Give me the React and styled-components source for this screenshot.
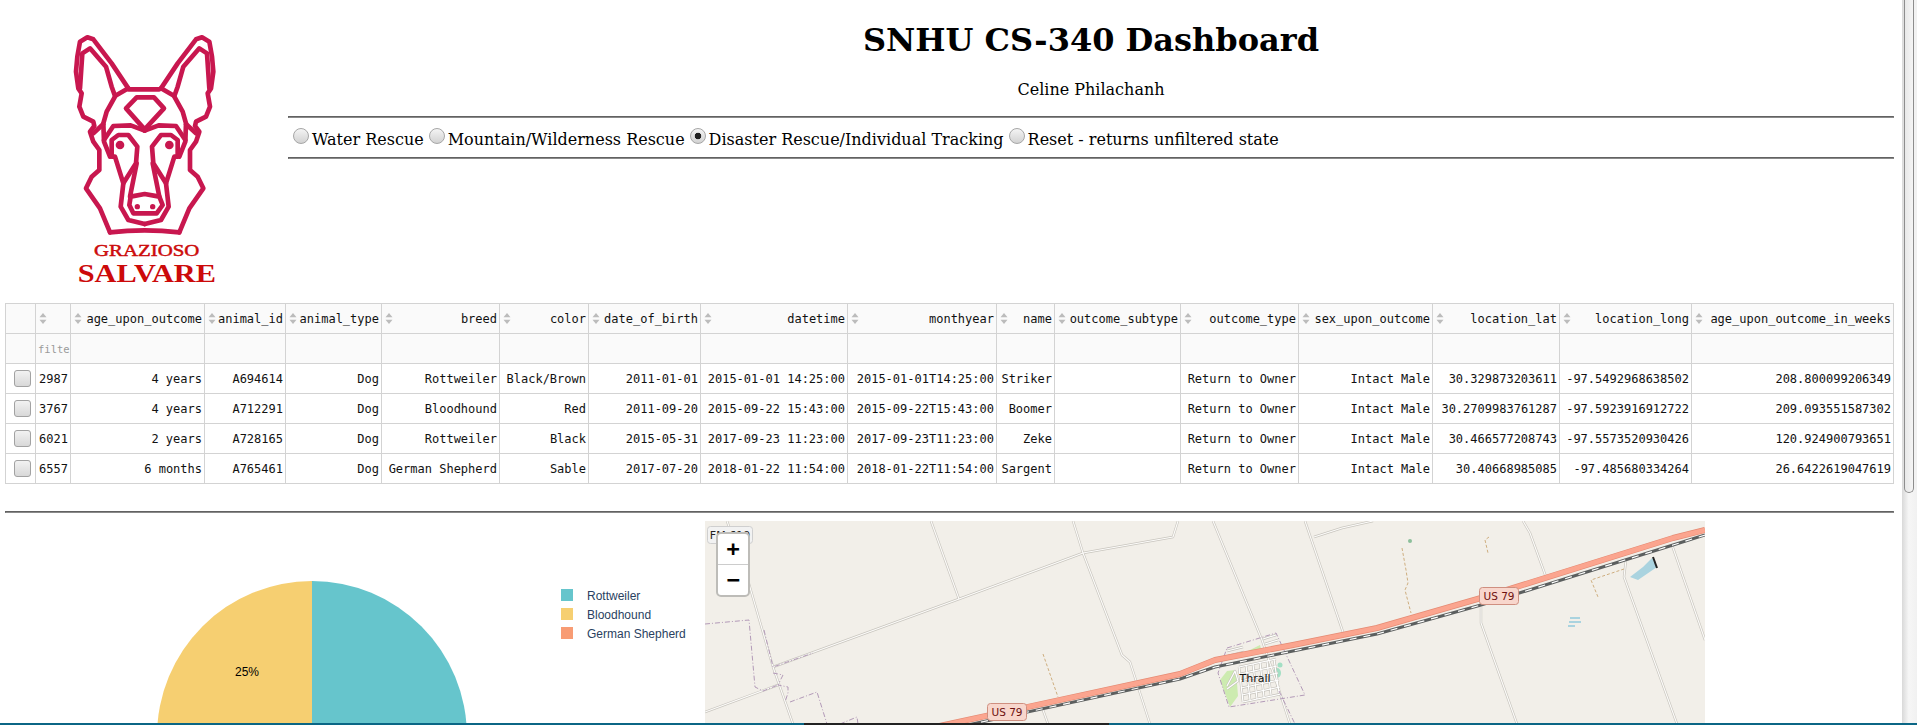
import React from 'react'
import styled, { createGlobalStyle } from 'styled-components'

const columns = [
  { name: '', width: 30 },
  { name: '', width: 35, sort: true },
  { name: 'age_upon_outcome', width: 134, sort: true },
  { name: 'animal_id', width: 81, sort: true },
  { name: 'animal_type', width: 96, sort: true },
  { name: 'breed', width: 118, sort: true },
  { name: 'color', width: 89, sort: true },
  { name: 'date_of_birth', width: 112, sort: true },
  { name: 'datetime', width: 147, sort: true },
  { name: 'monthyear', width: 149, sort: true },
  { name: 'name', width: 58, sort: true },
  { name: 'outcome_subtype', width: 126, sort: true },
  { name: 'outcome_type', width: 118, sort: true },
  { name: 'sex_upon_outcome', width: 134, sort: true },
  { name: 'location_lat', width: 127, sort: true },
  { name: 'location_long', width: 132, sort: true },
  { name: 'age_upon_outcome_in_weeks', width: 202, sort: true },
]

const rows = [
  ['2987', '4 years', 'A694614', 'Dog', 'Rottweiler', 'Black/Brown', '2011-01-01', '2015-01-01 14:25:00', '2015-01-01T14:25:00', 'Striker', '', 'Return to Owner', 'Intact Male', '30.329873203611', '-97.5492968638502', '208.800099206349'],
  ['3767', '4 years', 'A712291', 'Dog', 'Bloodhound', 'Red', '2011-09-20', '2015-09-22 15:43:00', '2015-09-22T15:43:00', 'Boomer', '', 'Return to Owner', 'Intact Male', '30.2709983761287', '-97.5923916912722', '209.093551587302'],
  ['6021', '2 years', 'A728165', 'Dog', 'Rottweiler', 'Black', '2015-05-31', '2017-09-23 11:23:00', '2017-09-23T11:23:00', 'Zeke', '', 'Return to Owner', 'Intact Male', '30.466577208743', '-97.5573520930426', '120.924900793651'],
  ['6557', '6 months', 'A765461', 'Dog', 'German Shepherd', 'Sable', '2017-07-20', '2018-01-22 11:54:00', '2018-01-22T11:54:00', 'Sargent', '', 'Return to Owner', 'Intact Male', '30.40668985085', '-97.485680334264', '26.6422619047619'],
]

const filters = [
  { label: 'Water Rescue' },
  { label: 'Mountain/Wilderness Rescue' },
  { label: 'Disaster Rescue/Individual Tracking', checked: true },
  { label: 'Reset - returns unfiltered state' },
]

const legend = [
  { label: 'Rottweiler', color: '#66c5cc' },
  { label: 'Bloodhound', color: '#f6cf71' },
  { label: 'German Shepherd', color: '#f89c74' },
]

const roads = [
  '22,0 42,56 68,146 88,203',
  '226,0 254,78',
  '68,146 254,78 378,32 468,16 473,0',
  '368,0 378,32 417,134 425,141 445,203',
  '0,191 73,164',
  '338,189 343,203',
  '508,0 557,119 574,169 585,203',
  '600,0 639,114',
  '609,16 637,7 668,0',
  '818,0 825,12 841,56',
  '776,86 776,102 812,203',
  '921,39 919,56 972,203',
  '967,24 1000,119',
]

// thrall street grid, drawn under the highway
const streets = [
  '534,146 571,138',
  '535,153 572,145',
  '535,160 573,152',
  '536,167 574,159',
  '537,174 575,166',
  '538,181 576,173',
  '534,146 538,181',
  '541,144 545,179',
  '548,143 552,178',
  '555,141 559,176',
  '562,140 566,174',
  '569,138 574,172',
  '522,130 538,126',
  '523,135 539,131',
  '558,118 571,114',
  '560,123 573,119',
  '522,165 530,150 533,160 522,168',
]

const boundaries = [
  '0,103 44,99 50,166 58,170 73,164',
  '85,181 112,171 122,203',
  '135,203 152,196 153,203',
  '59,109 68,146 108,132',
  '68,152 78,154 73,164 83,166 83,172 80,181',
  '522,127 571,112 600,174 524,186 513,152 522,127',
  '574,170 590,203',
]

const tracks = [
  '338,133 353,176',
  '697,27 701,49 703,62 700,69 706,92',
  '784,16 780,19 783,32',
  '919,48 886,59 893,76',
]

const highway = '230,206 475,153 510,139 588,124 672,107 776,77 968,17 1000,9'
const railway = '235,210 475,158 510,146 588,130 672,113 776,84 968,24 1000,14'

const shields = [
  { x: 282, y: 182 },
  { x: 774, y: 66 },
]

const GlobalStyle = createGlobalStyle`
  html, body {
    margin: 0;
    height: 100%;
    overflow: hidden;
    background: #fff;
  }
`

const Shell = styled.div`
  display: flex;
  height: 100vh;
`

const Page = styled.div`
  flex: 1;
  min-width: 0;
  overflow-y: auto;
  font-family: 'DejaVu Serif', serif;
  color: #000;
`

const ScrollRail = styled.div`
  flex: none;
  width: 15px;
  box-sizing: border-box;
  padding: 0 3px 0 2px;
  background: linear-gradient(to right, #d9d9d9, #f6f6f6 45%, #f1f1f1);
`

const ScrollThumb = styled.div`
  height: 493px;
  box-sizing: border-box;
  border: 1px solid #8d8d8d;
  border-top: 0;
  border-radius: 0 0 5px 5px;
  background: linear-gradient(to right, #e8e8e8, #f5f5f5);
`

const Content = styled.div`
  padding: 0 8px 45px 5px;
`

const Header = styled.header`
  display: flex;
  height: 303px;
`

const Logo = styled.svg`
  flex: none;
  width: 283px;
  height: 295px;
`

const HeaderMain = styled.div`
  flex: 1;
  min-width: 0;
`

const Title = styled.h1`
  margin: 22px 0 21px;
  font-size: 32px;
  line-height: 37px;
  text-align: center;
`

const Author = styled.p`
  margin: 0 0 17px;
  font-size: 16px;
  line-height: 19px;
  text-align: center;
`

const Rule = styled.hr`
  margin: 0;
  height: 0;
  border: 1px solid;
  border-color: #626262 #808080 #8a8a8a #626262;
`

const Filters = styled.div`
  height: 39px;
  box-sizing: border-box;
  padding: 4px 0 0 5px;
  display: flex;
  align-items: center;
  gap: 5px;
  font-size: 16px;
`

const FilterLabel = styled.label`
  display: flex;
  align-items: center;
  gap: 3px;
`

const Radio = styled.input`
  appearance: none;
  flex: none;
  width: 16px;
  height: 16px;
  margin: -8px 0 0;
  border: 1px solid #a6a6a6;
  border-radius: 50%;
  background: linear-gradient(#f4f4f4, #d2d2d2);

  &:checked {
    background: radial-gradient(circle, #222 0 3px, transparent 3.6px), linear-gradient(#f4f4f4, #d2d2d2);
  }
`

const Table = styled.table`
  table-layout: fixed;
  border-collapse: collapse;
  width: 1888px;
  font-family: 'DejaVu Sans Mono', monospace;
  font-size: 12px;
  color: #111;
`

const HeadCell = styled.th`
  height: 29px;
  padding: 0 2px 0 3px;
  border: 1px solid #d3d3d3;
  background: #fafafa;
  font-weight: 400;
`

const FilterCell = styled(HeadCell)`
  padding: 0 0 0 2px;
`

const HeadInner = styled.div`
  display: flex;
  align-items: center;
  justify-content: space-between;
  white-space: nowrap;
`

const FilterInput = styled.input`
  display: block;
  width: 32px;
  padding: 0;
  border: 0;
  outline: 0;
  background: transparent;
  font-family: 'DejaVu Sans Mono', monospace;
  font-size: 10.5px;

  &::placeholder {
    color: #9a9a9a;
  }
`

const Cell = styled.td`
  height: 29px;
  padding: 0 2px 0 3px;
  border: 1px solid #d3d3d3;
  text-align: right;
  white-space: nowrap;
`

const CheckCell = styled(Cell)`
  padding: 0 0 0 3px;
  text-align: center;
`

const RowCheck = styled.input`
  appearance: none;
  display: block;
  width: 17px;
  height: 17px;
  margin: 0 auto;
  border: 1px solid #a2a2a2;
  border-radius: 3px;
  background: linear-gradient(#f2f2f2, #d8d8d8);
`

const BottomRule = styled(Rule)`
  margin: 27px 0 8px;
`

const Lower = styled.section`
  display: flex;
  align-items: flex-start;
`

const Chart = styled.svg`
  flex: none;
  width: 700px;
  height: 500px;
`

const MapBox = styled.div`
  position: relative;
  flex: none;
  width: 1000px;
  height: 500px;
  background: #f2efe9;
  overflow: hidden;
`

const MapDrawing = styled.svg`
  display: block;
  width: 1000px;
  height: 500px;
`

const ZoomControl = styled.div`
  position: absolute;
  left: 11px;
  top: 11px;
  width: 30px;
  border: 2px solid #bdbcb8;
  border-radius: 5px;
  background: #fff;
`

const ZoomButton = styled.div`
  height: 30px;
  display: flex;
  align-items: center;
  justify-content: center;
  font-family: 'DejaVu Sans Mono', monospace;
  font-size: 22px;
  font-weight: 700;
  line-height: 30px;
  color: #000;

  & + & {
    border-top: 1px solid #ccc;
  }
`

const LoadingBar = styled.div`
  position: fixed;
  left: 0;
  right: 0;
  bottom: 0;
  height: 2px;
  background: linear-gradient(to right, #0b6685 804px, #222 804px, #222 1109px, #0b6685 1109px);
`

function DogLogo() {
  const left = [
    '385,265 335,190 280,118 262,112 240,125 232,170 228,215 235,265 245,280 238,320 250,350 280,365 283,378 270,395 280,425 298,450 298,510 275,530 258,565 300,625 330,697',
    '240,265 247,160 270,145 318,200 335,260 345,288 385,265',
    '345,290 320,335 310,370 312,425 330,470',
    '280,400 310,372',
    '312,420 340,378 392,376 434,392',
    '335,470 335,420 355,405 385,405 412,440 408,490 370,550 345,470 335,470',
    '410,490 390,590',
    '370,550 362,620 385,660 434,672',
  ]
  return (
    <Logo viewBox="15 0 849 885">
      <g fill="none" stroke="#c8174f" strokeWidth="14" strokeLinejoin="round" strokeLinecap="round">
        {left.map(points => (
          <polyline key={points} points={points} />
        ))}
        <g transform="matrix(-1 0 0 1 868 0)">
          {left.map(points => (
            <polyline key={points} points={points} />
          ))}
        </g>
        <polyline points="385,268 478,268" />
        <path d="M330 697 Q434 685 538 697" />
        <polygon points="378,325 410,292 462,292 492,325 434,388" />
        <polygon points="392,590 434,582 478,590 488,615 470,640 400,640 388,615" />
      </g>
      <g fill="#c8174f">
        <circle cx="360" cy="435" r="13" />
        <circle cx="508" cy="435" r="13" />
        <circle cx="412" cy="620" r="8" />
        <circle cx="458" cy="620" r="8" />
      </g>
      <g fill="#cc0a0a" fontFamily="'Liberation Serif', serif">
        <text x="282" y="768" fontSize="52" stroke="#cc0a0a" strokeWidth="1.5" textLength="316" lengthAdjust="spacingAndGlyphs">GRAZIOSO</text>
        <text x="233" y="846" fontSize="78" fontWeight="700" textLength="415" lengthAdjust="spacingAndGlyphs">SALVARE</text>
      </g>
    </Logo>
  )
}

function SortIcon() {
  return (
    <svg width="8" height="11" viewBox="0 0 8 11">
      <path d="M4 0 L7.5 4.2 H0.5 Z M4 11 L0.5 6.8 H7.5 Z" fill="#bcbcbc" />
    </svg>
  )
}

function PieChart() {
  return (
    <Chart viewBox="0 0 700 500">
      <path d="M307 60 A155 155 0 0 1 307 370 Z" fill="#66c5cc" />
      <path d="M307 215 V60 A155 155 0 0 0 152 215 Z" fill="#f6cf71" />
      <path d="M307 215 H152 A155 155 0 0 0 307 370 Z" fill="#f89c74" />
      <g fontFamily="'Liberation Sans', sans-serif" fontSize="12">
        <text x="242" y="155" textAnchor="middle" fill="#000">25%</text>
        <text x="242" y="280" textAnchor="middle" fill="#000">25%</text>
        <text x="385" y="220" textAnchor="middle" fill="#000">50%</text>
        {legend.map((item, index) => (
          <g key={item.label}>
            <rect x="556" y={68 + index * 19} width="12" height="12" fill={item.color} />
            <text x="582" y={79 + index * 19} fill="#2a3f5f">{item.label}</text>
          </g>
        ))}
      </g>
    </Chart>
  )
}

function MapTiles() {
  return (
    <MapDrawing viewBox="0 0 1000 500">
      <g fill="none" strokeLinejoin="round">
        <polygon points="515,159 522,150 531,149 533,175 525,186" fill="#cdebb0" />
        <polygon points="541,131 555,124 557,131" fill="#cdebb0" />
        <ellipse cx="572" cy="152" rx="4" ry="5" fill="#a3dfc4" />
        <circle cx="575" cy="144" r="2.5" fill="#a3dfc4" />
        <circle cx="705" cy="20" r="2" fill="#8cbf9a" />
        {roads.map(points => (
          <polyline key={points} points={points} stroke="#c8c5be" strokeWidth="2.4" />
        ))}
        {streets.map(points => (
          <polyline key={points} points={points} stroke="#c4c1ba" strokeWidth="2.4" />
        ))}
        {roads.map(points => (
          <polyline key={points} points={points} stroke="#fdfcfa" strokeWidth="1.1" />
        ))}
        {streets.map(points => (
          <polyline key={points} points={points} stroke="#fff" strokeWidth="1.2" />
        ))}
        {boundaries.map(points => (
          <polyline key={points} points={points} stroke="#b39ab8" strokeWidth="1" strokeDasharray="5 2 1 2" />
        ))}
        {tracks.map(points => (
          <polyline key={points} points={points} stroke="#c9a673" strokeWidth="0.9" strokeDasharray="3 2" />
        ))}
        <polyline points={railway} stroke="#5c5f5f" strokeWidth="3" />
        <polyline points={railway} stroke="#fff" strokeWidth="1.2" strokeDasharray="7 7" />
        <polyline points={highway} stroke="#e58a73" strokeWidth="6" />
        <polyline points={highway} stroke="#fba58f" strokeWidth="4.8" />
      </g>
      <polygon points="947,37 952,46 933,59 925,56 938,46" fill="#aad3df" />
      <line x1="948" y1="36" x2="952" y2="47" stroke="#222" strokeWidth="2" />
      <g stroke="#aad3df" strokeWidth="2">
        <line x1="865" y1="97" x2="875" y2="97" />
        <line x1="864" y1="101" x2="876" y2="101" />
        <line x1="863" y1="105" x2="870" y2="105" />
      </g>
      <rect x="2.5" y="5.5" width="45" height="17" rx="3" fill="#f2f2f2" stroke="#cfcfcf" />
      <text x="25" y="18" textAnchor="middle" fontFamily="'DejaVu Sans', sans-serif" fontSize="11" fill="#222">FM 619</text>
      {shields.map(shield => (
        <g key={shield.x}>
          <rect x={shield.x + 0.5} y={shield.y + 0.5} width="39" height="17" rx="3" fill="#f8d6cc" stroke="#cf8f80" />
          <text x={shield.x + 20} y={shield.y + 13} textAnchor="middle" fontFamily="'DejaVu Sans', sans-serif" fontSize="10.5" fill="#6e1010">US 79</text>
        </g>
      ))}
      <text x="550" y="161" textAnchor="middle" fontFamily="'DejaVu Sans', sans-serif" fontSize="11" fill="#111">Thrall</text>
    </MapDrawing>
  )
}

export default function App() {
  return (
    <>
      <GlobalStyle />
      <Shell>
        <Page>
          <Content>
            <Header>
              <DogLogo />
              <HeaderMain>
                <Title>SNHU CS-340 Dashboard</Title>
                <Author>Celine Philachanh</Author>
                <Rule />
                <Filters>
                  {filters.map(filter => (
                    <FilterLabel key={filter.label}>
                      <Radio type="radio" name="filter" defaultChecked={filter.checked} />
                      {filter.label}
                    </FilterLabel>
                  ))}
                </Filters>
                <Rule />
              </HeaderMain>
            </Header>

            <Table>
              <colgroup>
                {columns.map((col, index) => (
                  <col key={index} style={{ width: col.width }} />
                ))}
              </colgroup>
              <thead>
                <tr>
                  {columns.map((col, index) => (
                    <HeadCell key={index}>
                      <HeadInner>
                        {col.sort && <SortIcon />}
                        {col.name}
                      </HeadInner>
                    </HeadCell>
                  ))}
                </tr>
                <tr>
                  {columns.map((col, index) => (
                    <FilterCell key={index}>
                      {index === 1 && <FilterInput placeholder="filter data..." />}
                    </FilterCell>
                  ))}
                </tr>
              </thead>
              <tbody>
                {rows.map(row => (
                  <tr key={row[0]}>
                    <CheckCell>
                      <RowCheck type="checkbox" />
                    </CheckCell>
                    {row.map((value, index) => (
                      <Cell key={index}>{value}</Cell>
                    ))}
                  </tr>
                ))}
              </tbody>
            </Table>

            <BottomRule />

            <Lower>
              <PieChart />
              <MapBox>
                <MapTiles />
                <ZoomControl>
                  <ZoomButton>+</ZoomButton>
                  <ZoomButton>−</ZoomButton>
                </ZoomControl>
              </MapBox>
            </Lower>
          </Content>
        </Page>
        <ScrollRail>
          <ScrollThumb />
        </ScrollRail>
      </Shell>
      <LoadingBar />
    </>
  )
}
